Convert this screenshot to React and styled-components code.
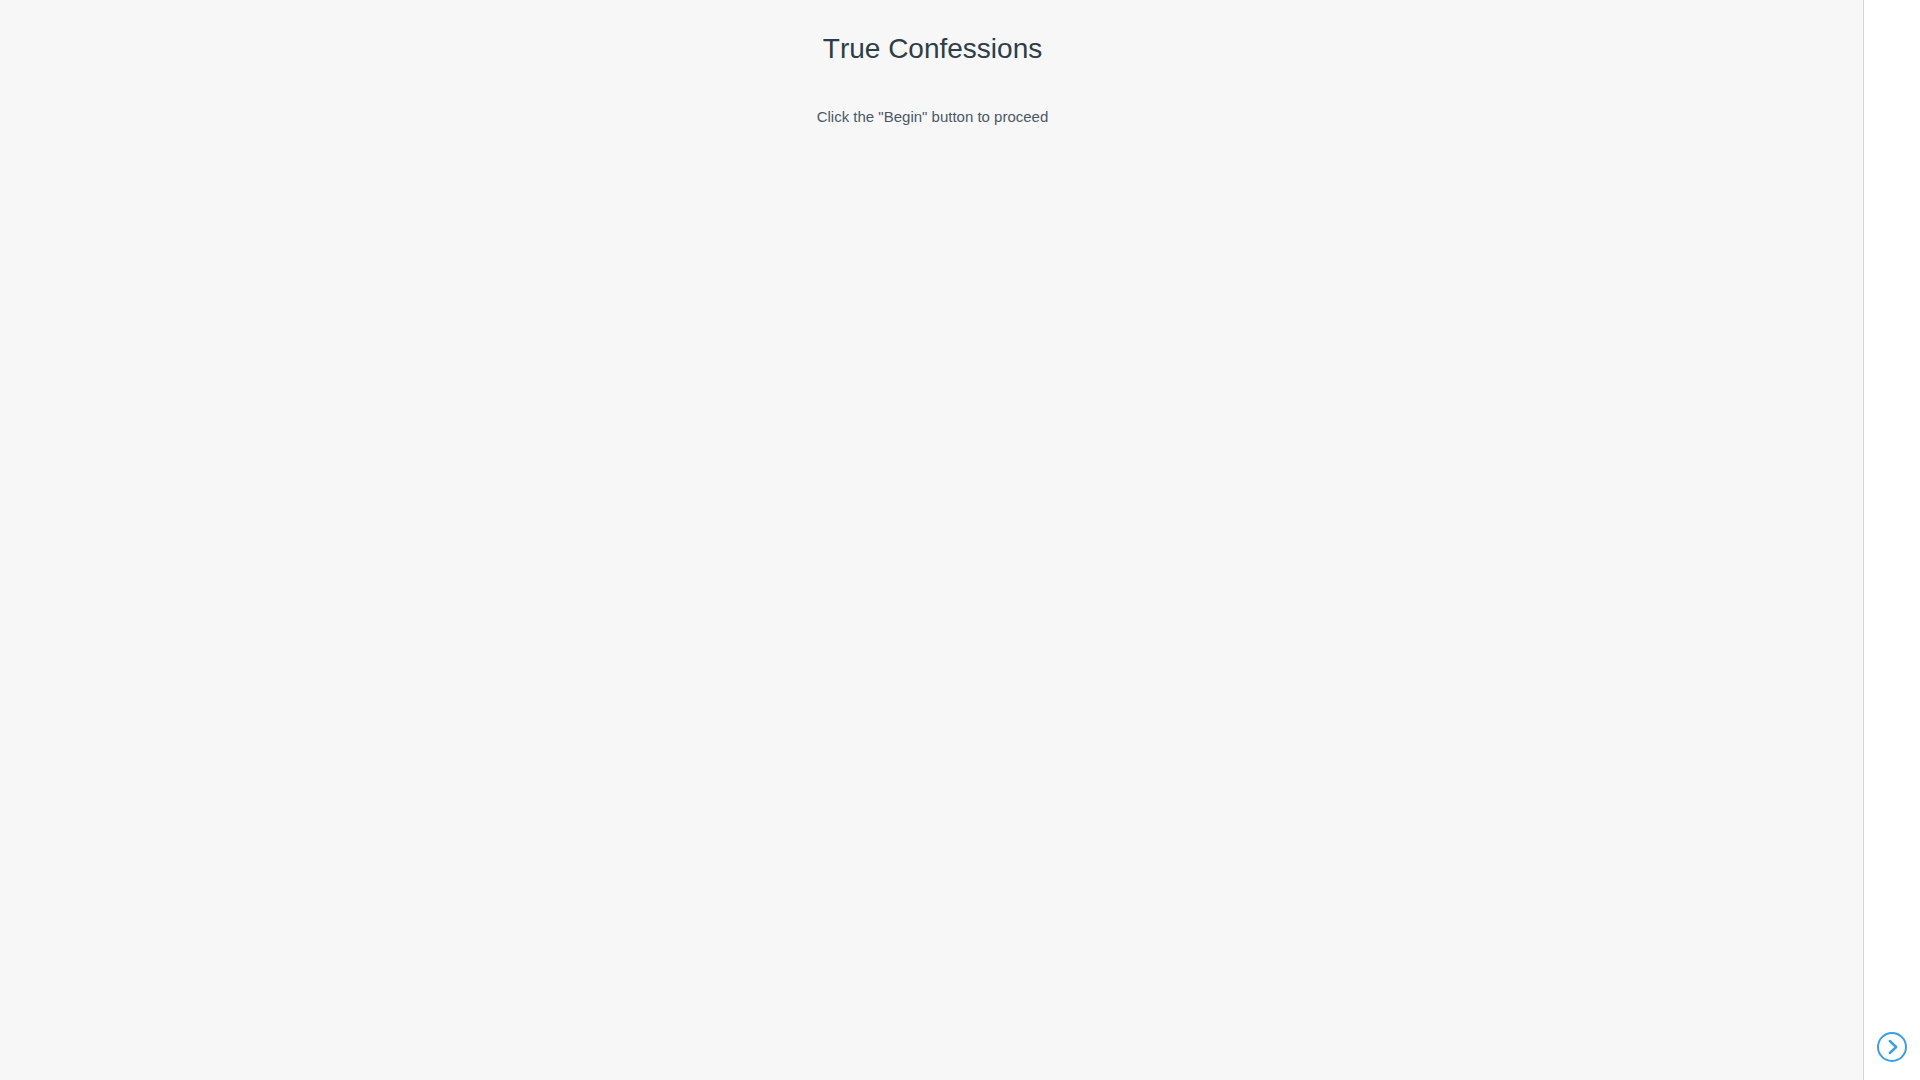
import React from "react";
import styled, { createGlobalStyle } from "styled-components";

// styles

const GlobalStyle = createGlobalStyle`
  body {
    margin: 0;
    background: #f7f7f7;
    font-family: "Liberation Sans", Arial, sans-serif;
  }
`;

const Page = styled.div`
  display: flex;
  min-height: 100vh;
`;

const Content = styled.main`
  flex: 1;
  display: flex;
  flex-direction: column;
  align-items: center;
  padding: 33px 0 0 2px;
`;

const Title = styled.h1`
  margin: 0;
  color: #2d3e4a;
  font-size: 28px;
  font-weight: 400;
  font-kerning: none;
  line-height: 32px;
`;

const Message = styled.p`
  margin: 43px 0 0;
  color: #4c5964;
  font-size: 15px;
  line-height: 18px;
`;

const Sidebar = styled.aside`
  box-sizing: border-box;
  width: 57px;
  display: flex;
  flex-direction: column;
  align-items: center;
  justify-content: flex-end;
  padding-bottom: 18px;
  border-left: 1px solid #d5d5d5;
  background: #ffffff;
`;

const NextButton = styled.button`
  display: flex;
  width: 30px;
  height: 30px;
  padding: 0;
  border: 0;
  border-radius: 50%;
  background: transparent;
  color: #3a9fe0;
  cursor: pointer;
`;

function NextIcon() {
  return (
    <svg width="30" height="30" viewBox="0 0 30 30" fill="none" stroke="currentColor" aria-hidden="true">
      <circle cx="15" cy="15" r="14" strokeWidth="2" />
      <path d="M12.8 9L19.2 15L12.8 21" strokeWidth="2.4" strokeLinecap="round" strokeLinejoin="round" />
    </svg>
  );
}

function App() {
  return (
    <>
      <GlobalStyle />
      <Page>
        <Content>
          <Title>True Confessions</Title>
          <Message>Click the "Begin" button to proceed</Message>
        </Content>
        <Sidebar>
          <NextButton type="button" aria-label="Begin">
            <NextIcon />
          </NextButton>
        </Sidebar>
      </Page>
    </>
  );
}

export default App;
